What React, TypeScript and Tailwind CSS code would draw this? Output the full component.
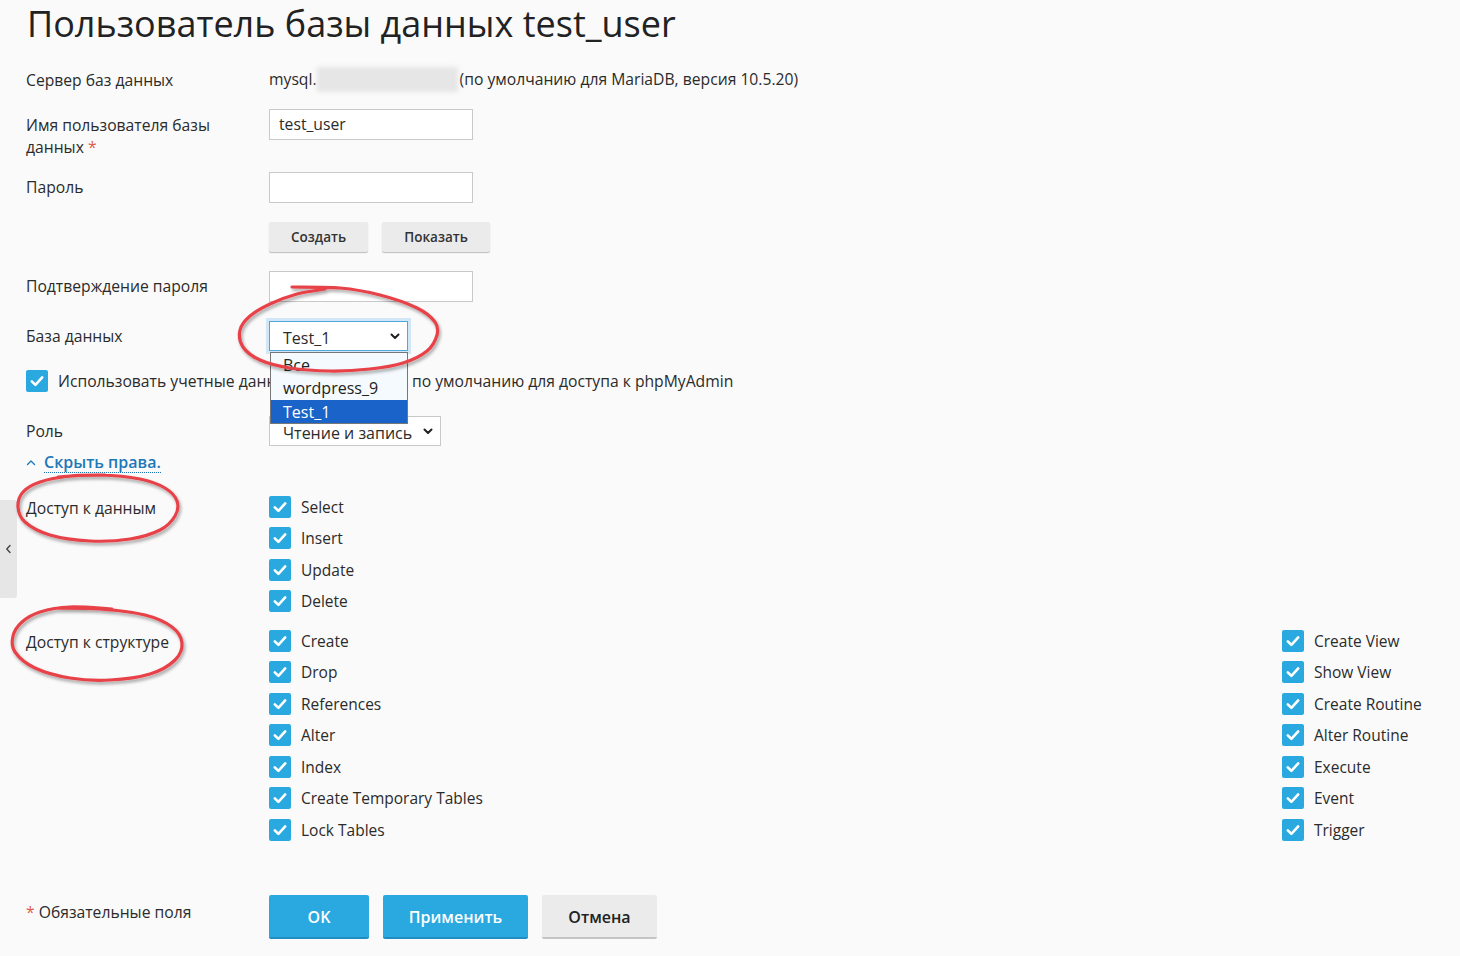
import React from "react";

type Pt = [number, number];

function smoothPath(pts: Pt[]): string {
  if (pts.length < 2) return "";
  let d = `M${pts[0][0]},${pts[0][1]}`;
  for (let i = 0; i < pts.length - 1; i++) {
    const p0 = pts[i - 1] || pts[i];
    const p1 = pts[i];
    const p2 = pts[i + 1];
    const p3 = pts[i + 2] || p2;
    const c1x = p1[0] + (p2[0] - p0[0]) / 6;
    const c1y = p1[1] + (p2[1] - p0[1]) / 6;
    const c2x = p2[0] - (p3[0] - p1[0]) / 6;
    const c2y = p2[1] - (p3[1] - p1[1]) / 6;
    d += ` C${c1x.toFixed(1)},${c1y.toFixed(1)} ${c2x.toFixed(1)},${c2y.toFixed(1)} ${p2[0]},${p2[1]}`;
  }
  return d;
}

const ellipse1: Pt[] = [
  [292, 287], [340, 288], [380, 295], [417, 308], [435, 322], [437, 335], [427, 351], [403, 363], [370, 369], [330, 371], [290, 368], [260, 360], [243, 347], [240, 330], [250, 316], [270, 304], [297, 294], [325, 289],
];
const ellipse2: Pt[] = [
  [58, 477], [100, 475], [140, 479], [165, 488], [177, 501], [175, 516], [160, 530], [130, 539], [90, 541], [50, 535], [25, 522], [18, 507], [23, 492], [40, 482], [70, 476], [105, 475],
];
const ellipse3: Pt[] = [
  [58, 608], [100, 609], [145, 615], [172, 627], [182, 643], [175, 660], [150, 674], [110, 680], [70, 678], [35, 668], [15, 652], [13, 636], [22, 622], [40, 612], [70, 607], [112, 609],
];

function Check() {
  return (
    <span className="inline-flex h-[22px] w-[22px] shrink-0 items-center justify-center rounded-[2px] bg-[#29a9df]">
      <svg width="22" height="22" viewBox="0 0 22 22">
        <path d="M5.8 11.3 L9.4 14.9 L16.2 7.4" fill="none" stroke="#ffffff" strokeWidth="2.6" strokeLinecap="round" strokeLinejoin="round" />
      </svg>
    </span>
  );
}

function CheckRow({ label }: { label: string }) {
  return (
    <div className="flex h-[31.5px] items-center gap-[10px]">
      <Check />
      <span className="pt-[1px] text-[15.5px] text-[#2b2b2b]">{label}</span>
    </div>
  );
}

function Chevron() {
  return (
    <svg width="10" height="7" viewBox="0 0 10 7">
      <path d="M1.5 1.5 L5 5 L8.5 1.5" fill="none" stroke="#222" strokeWidth="2" strokeLinecap="round" strokeLinejoin="round" />
    </svg>
  );
}

export default function App() {
  const dataRights = ["Select", "Insert", "Update", "Delete"];
  const structLeft = ["Create", "Drop", "References", "Alter", "Index", "Create Temporary Tables", "Lock Tables"];
  const structRight = ["Create View", "Show View", "Create Routine", "Alter Routine", "Execute", "Event", "Trigger"];

  return (
    <div
      className="relative min-h-screen w-full bg-[#fafafa] pl-[26px] text-[15.7px] text-[#2b2b2b]"
      style={{ fontFamily: '"Open Sans", "Noto Sans", sans-serif' }}
    >
      {/* side tab */}
      <div className="absolute left-0 top-[500px] flex h-[98px] w-[17px] items-center justify-center rounded-r-[3px] bg-[#e6e6e6]">
        <svg width="7" height="10" viewBox="0 0 7 10">
          <path d="M5 1.5 L1.8 5 L5 8.5" fill="none" stroke="#444" strokeWidth="1.4" strokeLinecap="round" strokeLinejoin="round" />
        </svg>
      </div>

      <h1 className="h-[48px] pl-[1px] text-[36px] font-normal leading-[48px] text-[#222]">
        Пользователь базы данных test_user
      </h1>

      {/* server */}
      <div className="mt-[21px] flex h-[24px] items-center">
        <div className="w-[243px]">Сервер баз данных</div>
        <div className="-mt-[3px] flex items-center">
          <span>mysql.</span>
          <span className="inline-block h-[25px] w-[141px] bg-[#e6e6e6] blur-[2px]"></span>
          <span className="pl-[2px]">(по умолчанию для MariaDB, версия 10.5.20)</span>
        </div>
      </div>

      {/* username */}
      <div className="mt-[16px] flex items-start">
        <div className="w-[243px] pt-[5px]">
          <div className="w-[200px] leading-[22px]">
            Имя пользователя базы данных <span className="text-[#e05a4f]">*</span>
          </div>
        </div>
        <div className="flex h-[31px] w-[204px] items-center border border-[#c9c9c9] bg-white px-[9px] pt-[1px]">
          test_user
        </div>
      </div>

      {/* password */}
      <div className="mt-[14px] flex items-center">
        <div className="w-[243px] pt-[1px]">Пароль</div>
        <div className="h-[31px] w-[204px] border border-[#c9c9c9] bg-white"></div>
      </div>

      {/* gen buttons */}
      <div className="mt-[19px] flex pl-[243px]">
        <div className="flex h-[30px] w-[99px] items-center justify-center rounded-[2px] bg-[#ebebeb] text-[13.5px] font-semibold text-[#333] shadow-[0_1px_1px_rgba(0,0,0,0.25)]">
          Создать
        </div>
        <div className="ml-[14px] flex h-[30px] w-[108px] items-center justify-center rounded-[2px] bg-[#ebebeb] text-[13.5px] font-semibold text-[#333] shadow-[0_1px_1px_rgba(0,0,0,0.25)]">
          Показать
        </div>
      </div>

      {/* confirm */}
      <div className="mt-[19px] flex items-center">
        <div className="w-[243px] pt-[1px]">Подтверждение пароля</div>
        <div className="h-[31px] w-[204px] border border-[#c9c9c9] bg-white"></div>
      </div>

      {/* database */}
      <div className="mt-[19px] flex items-center">
        <div className="w-[243px] pt-[1px]">База данных</div>
        <div className="relative">
          <div className="flex h-[30px] w-[139px] items-center justify-between border border-[#4fa7dc] bg-white pl-[13px] pr-[7px] text-[16px] shadow-[0_0_0_3px_rgba(120,190,235,0.3)]">
            <span className="pt-[3px]">Test_1</span>
            <Chevron />
          </div>
          <div className="absolute left-[1px] top-[31px] z-10 w-[138px] border border-[#767676] bg-[#f4fafd] text-[16px] leading-none">
            <div className="flex h-[23px] items-center pl-[12px] text-[#222]">Все</div>
            <div className="flex h-[24px] items-center pl-[12px] text-[#222]">wordpress_9</div>
            <div className="flex h-[23px] items-center bg-[#1a64c9] pl-[12px] text-white">Test_1</div>
          </div>
        </div>
      </div>

      {/* checkbox */}
      <div className="mt-[19px] flex h-[22px] items-center gap-[10px]">
        <Check />
        <span className="flex items-center whitespace-nowrap pt-[1px]">
          <span className="inline-block w-[354px] overflow-hidden">Использовать учетные данные пользователя</span>
          <span>по умолчанию для доступа к phpMyAdmin</span>
        </span>
      </div>

      {/* role */}
      <div className="mt-[24px] flex items-center">
        <div className="w-[243px] pt-[1px]">Роль</div>
        <div className="flex h-[30px] w-[172px] items-center justify-between border border-[#c9c9c9] bg-white pl-[13px] pr-[7px] text-[16px]">
          <span className="pt-[3px]">Чтение и запись</span>
          <Chevron />
        </div>
      </div>

      {/* link */}
      <div className="mt-[6px] flex h-[20px] items-center gap-[8px]">
        <svg width="10" height="7" viewBox="0 0 10 7">
          <path d="M1.5 5.5 L5 2 L8.5 5.5" fill="none" stroke="#1c78b8" strokeWidth="1.4" strokeLinecap="round" strokeLinejoin="round" />
        </svg>
        <span className="border-b border-dotted border-[#1c78b8] text-[16px] font-semibold leading-[20px] text-[#1c78b8]">
          Скрыть права.
        </span>
      </div>

      {/* data access */}
      <div className="mt-[19px] flex">
        <div className="w-[243px] pt-[6px]">Доступ к данным</div>
        <div className="flex flex-col">
          {dataRights.map((r) => (
            <CheckRow key={r} label={r} />
          ))}
        </div>
      </div>

      {/* structure access */}
      <div className="mt-[8px] flex">
        <div className="w-[243px] pt-[6px]">Доступ к структуре</div>
        <div className="flex w-[1013px] flex-col">
          {structLeft.map((r) => (
            <CheckRow key={r} label={r} />
          ))}
        </div>
        <div className="flex flex-col">
          {structRight.map((r) => (
            <CheckRow key={r} label={r} />
          ))}
        </div>
      </div>

      {/* footer */}
      <div className="mt-[49px] flex items-start pb-[17px]">
        <div className="w-[243px] pt-[6px]">
          <span className="text-[#e05a4f]">*</span> Обязательные поля
        </div>
        <div className="flex gap-[14px]">
          <div className="flex h-[44px] w-[100px] items-center justify-center rounded-[2px] border-b-2 border-[#1f8ec2] bg-[#29a9df] pt-[3px] text-[16px] font-semibold text-white">
            OK
          </div>
          <div className="flex h-[44px] w-[145px] items-center justify-center rounded-[2px] border-b-2 border-[#1f8ec2] bg-[#29a9df] pt-[3px] text-[16px] font-semibold text-white">
            Применить
          </div>
          <div className="flex h-[44px] w-[115px] items-center justify-center rounded-[2px] border-b-2 border-[#c4c4c4] bg-[#ebebeb] pt-[3px] text-[16px] font-semibold text-[#222]">
            Отмена
          </div>
        </div>
      </div>

      {/* annotation overlay */}
      <svg className="pointer-events-none absolute left-0 top-0 z-20" width="1460" height="956" viewBox="0 0 1460 956">
        <defs>
          <filter id="sh" x="-10%" y="-10%" width="120%" height="130%">
            <feDropShadow dx="1.5" dy="2.5" stdDeviation="1.8" floodColor="#000" floodOpacity="0.35" />
          </filter>
        </defs>
        {[ellipse1, ellipse2, ellipse3].map((e, i) => (
          <path key={i} d={smoothPath(e)} fill="none" stroke="#e8424a" strokeWidth="3.2" strokeLinecap="round" filter="url(#sh)" />
        ))}
      </svg>
    </div>
  );
}
